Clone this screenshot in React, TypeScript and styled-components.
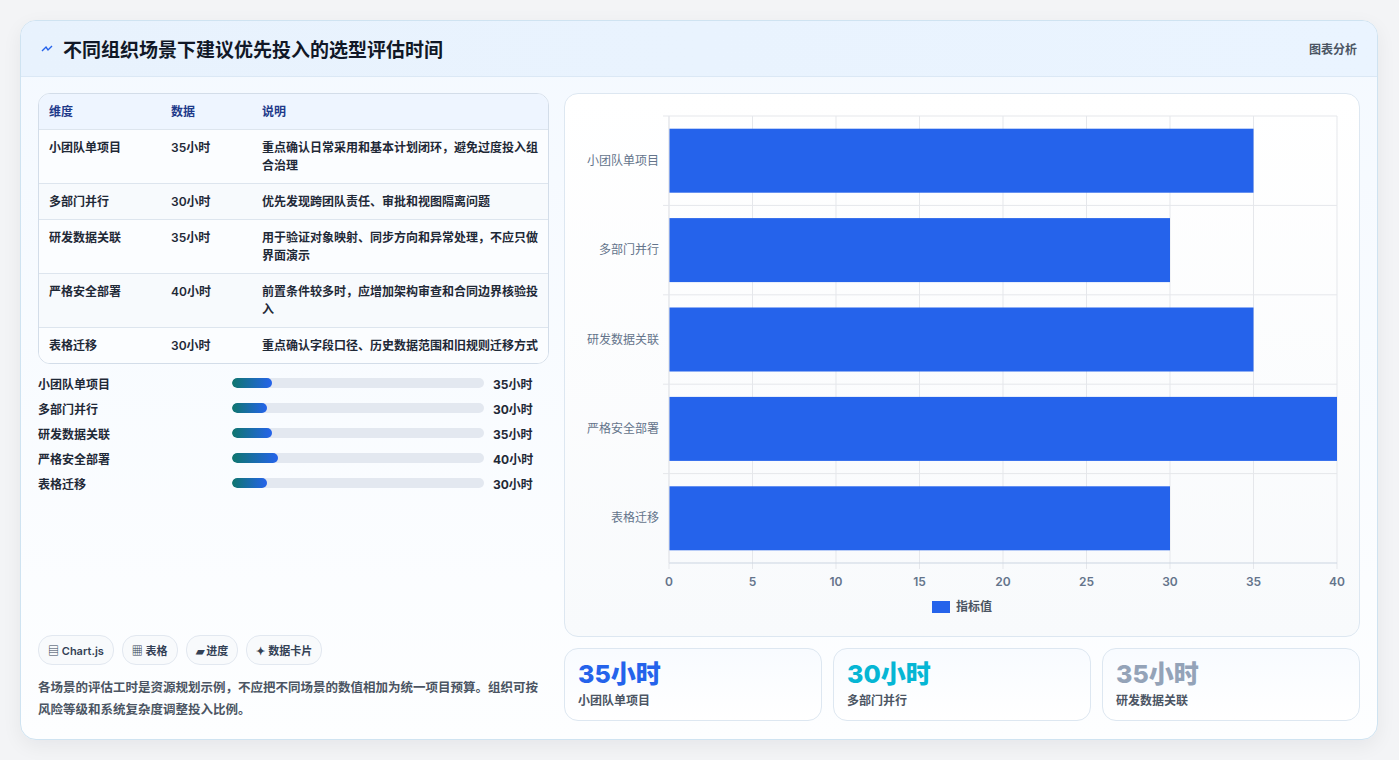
import * as React from 'react'
import styled, { createGlobalStyle } from 'styled-components'

const GlobalStyle = createGlobalStyle`
    body {
        margin: 0;
        background: #f3f4f6;
        font-family: Inter, "Noto Sans CJK SC", sans-serif;
    }
`

const ROWS = [
    { name: '小团队单项目', value: 35, note: '重点确认日常采用和基本计划闭环，避免过度投入组合治理' },
    { name: '多部门并行', value: 30, note: '优先发现跨团队责任、审批和视图隔离问题' },
    { name: '研发数据关联', value: 35, note: '用于验证对象映射、同步方向和异常处理，不应只做界面演示' },
    { name: '严格安全部署', value: 40, note: '前置条件较多时，应增加架构审查和合同边界核验投入' },
    { name: '表格迁移', value: 30, note: '重点确认字段口径、历史数据范围和旧规则迁移方式' },
]

const Page = styled.div`
    width: 1399px;
    height: 760px;
    padding: 20px 21px 20px 20px;
    box-sizing: border-box;
    background: #f3f4f6;
`

const Card = styled.div`
    height: 720px;
    box-sizing: border-box;
    border: 1px solid #cfe3f1;
    border-radius: 16px;
    background: linear-gradient(180deg, #f4f9ff 0%, #fdfeff 100%);
    box-shadow: 0 6px 20px rgba(15, 23, 42, 0.06);
    overflow: hidden;
    display: flex;
    flex-direction: column;
`

const Header = styled.div`
    height: 55px;
    flex: none;
    display: flex;
    align-items: center;
    justify-content: space-between;
    padding: 0 20px;
    background: linear-gradient(90deg, #e8f2fd 0%, #eaf4ff 100%);
    border-bottom: 1px solid #dbe8f5;
`

const Title = styled.h1`
    margin: 0;
    font-size: 19px;
    font-weight: 700;
    color: #111827;
    display: flex;
    align-items: center;
    gap: 10px;
`

const Tag = styled.span`
    font-size: 12px;
    font-weight: 600;
    color: #4b5563;
`

const Body = styled.div`
    flex: 1;
    display: grid;
    grid-template-columns: 511px 796px;
    gap: 15px;
    padding: 16px 17px 18px 17px;
    min-height: 0;
`

const LeftCol = styled.div`
    display: flex;
    flex-direction: column;
    min-height: 0;
`

const Table = styled.div`
    border: 1px solid #d3dde9;
    border-radius: 12px;
    overflow: hidden;
    background: #fff;
    font-size: 12px;
`

const Row = styled.div<{ head?: boolean; alt?: boolean }>`
    display: grid;
    grid-template-columns: 122px 91px 1fr;
    padding: ${p => (p.head ? '9px 10px 8px' : '9px 10px 8px')};
    background: ${p => (p.head ? '#eef5ff' : p.alt ? '#f7fafd' : '#fbfdff')};
    border-top: ${p => (p.head ? 'none' : '1px solid #dde5ee')};
    color: ${p => (p.head ? '#1e3a8a' : '#1f2937')};
    font-weight: 600;
    line-height: 18px;
`

const Bars = styled.div`
    display: flex;
    flex-direction: column;
    gap: 7px;
    margin-top: 10px;
`

const BarRow = styled.div`
    display: grid;
    grid-template-columns: 185px 252px 1fr;
    gap: 0 9px;
    align-items: center;
    font-size: 12px;
    font-weight: 600;
    color: #1f2937;
    height: 18px;
`

const Track = styled.div`
    height: 10px;
    border-radius: 5px;
    background: #e3e8f0;
    overflow: hidden;
`

const Fill = styled.div`
    height: 100%;
    border-radius: 5px;
    background: linear-gradient(90deg, #0f766e, #2563eb);
`

const Value = styled.span`
    font-weight: 700;
    color: #1f2937;
`

const Spacer = styled.div`
    flex: 1;
`

const Chips = styled.div`
    display: flex;
    gap: 8px;
    margin-bottom: 12px;
`

const Chip = styled.span`
    font-size: 11px;
    font-weight: 600;
    color: #334155;
    border: 1px solid #e2e8f0;
    background: #f8fafc;
    border-radius: 14px;
    padding: 6px 9px;
`

const Note = styled.p`
    margin: 0;
    font-size: 12.5px;
    line-height: 22px;
    font-weight: 600;
    color: #4b5563;
`

const RightCol = styled.div`
    display: flex;
    flex-direction: column;
    gap: 11px;
`

const ChartPanel = styled.div`
    height: 544px;
    box-sizing: border-box;
    border: 1px solid #dde7f1;
    border-radius: 14px;
    background: linear-gradient(180deg, #ffffff, #f8fafc);
`

const Stats = styled.div`
    display: grid;
    grid-template-columns: repeat(3, 1fr);
    gap: 11px;
`

const Stat = styled.div`
    height: 73px;
    box-sizing: border-box;
    border: 1px solid #dde7f1;
    border-radius: 14px;
    background: linear-gradient(180deg, #f8fbff, #ffffff);
    padding: 10px 13px;
`

const StatValue = styled.div<{ color: string }>`
    font-size: 25px;
    font-weight: 800;
    color: ${p => p.color};
    line-height: 30px;
`

const StatLabel = styled.div`
    font-size: 12px;
    font-weight: 600;
    color: #4b5563;
    margin-top: 2px;
`

function Chart() {
    const x0 = 104
    const x1 = 772
    const top = 22
    const bottom = 469
    const band = (bottom - top) / 5
    const sx = (v: number) => x0 + ((x1 - x0) * v) / 40
    return (
        <svg width="796" height="544" viewBox="0 0 796 544">
            {[0, 5, 10, 15, 20, 25, 30, 35, 40].map(t => (
                <g key={t}>
                    <line x1={sx(t)} x2={sx(t)} y1={top} y2={bottom + 6} stroke="#e5e7eb" />
                    <text x={sx(t)} y={492} textAnchor="middle" fontSize="12" fill="#64748b" fontWeight="600">
                        {t}
                    </text>
                </g>
            ))}
            {ROWS.map((r, i) => (
                <g key={r.name}>
                    <line x1={x0 - 6} x2={x1} y1={top + band * i} y2={top + band * i} stroke="#e5e7eb" />
                    <rect x={x0} y={top + band * i + 12.7} width={sx(r.value) - x0} height={64} fill="#2563eb" />
                    <text x={x0 - 10} y={top + band * i + band / 2 + 4} textAnchor="end" fontSize="12" fill="#64748b">
                        {r.name}
                    </text>
                </g>
            ))}
            <line x1={x0} x2={x1} y1={bottom} y2={bottom} stroke="#cbd5e1" />
            <line x1={x0} x2={x0} y1={top} y2={bottom} stroke="#e5e7eb" />
            <rect x={367} y={507} width={18} height={12} fill="#2563eb" />
            <text x={391} y={517} fontSize="12" fill="#4b5563" fontWeight="600">
                指标值
            </text>
        </svg>
    )
}

export default function App() {
    return (
        <Page>
            <GlobalStyle />
            <Card>
                <Header>
                    <Title>
                        <svg width="12" height="10" viewBox="0 0 12 10">
                            <path d="M1 7 L5 3 L7 6 L11 2" stroke="#2563eb" strokeWidth="1.4" fill="none" />
                        </svg>
                        不同组织场景下建议优先投入的选型评估时间
                    </Title>
                    <Tag>图表分析</Tag>
                </Header>
                <Body>
                    <LeftCol>
                        <Table>
                            <Row head>
                                <span>维度</span>
                                <span>数据</span>
                                <span>说明</span>
                            </Row>
                            {ROWS.map((r, i) => (
                                <Row key={r.name} alt={i % 2 === 1}>
                                    <span>{r.name}</span>
                                    <span>{r.value}小时</span>
                                    <span>{r.note}</span>
                                </Row>
                            ))}
                        </Table>
                        <Bars>
                            {ROWS.map(r => (
                                <BarRow key={r.name}>
                                    <span>{r.name}</span>
                                    <Track>
                                        <Fill style={{ width: `${(r.value / 219) * 100}%` }} />
                                    </Track>
                                    <Value>{r.value}小时</Value>
                                </BarRow>
                            ))}
                        </Bars>
                        <Spacer />
                        <Chips>
                            <Chip>▤ Chart.js</Chip>
                            <Chip>▦ 表格</Chip>
                            <Chip>▰ 进度</Chip>
                            <Chip>✦ 数据卡片</Chip>
                        </Chips>
                        <Note>
                            各场景的评估工时是资源规划示例，不应把不同场景的数值相加为统一项目预算。组织可按风险等级和系统复杂度调整投入比例。
                        </Note>
                    </LeftCol>
                    <RightCol>
                        <ChartPanel>
                            <Chart />
                        </ChartPanel>
                        <Stats>
                            <Stat>
                                <StatValue color="#2563eb">35小时</StatValue>
                                <StatLabel>小团队单项目</StatLabel>
                            </Stat>
                            <Stat>
                                <StatValue color="#06b6d4">30小时</StatValue>
                                <StatLabel>多部门并行</StatLabel>
                            </Stat>
                            <Stat>
                                <StatValue color="#94a3b8">35小时</StatValue>
                                <StatLabel>研发数据关联</StatLabel>
                            </Stat>
                        </Stats>
                    </RightCol>
                </Body>
            </Card>
        </Page>
    )
}
